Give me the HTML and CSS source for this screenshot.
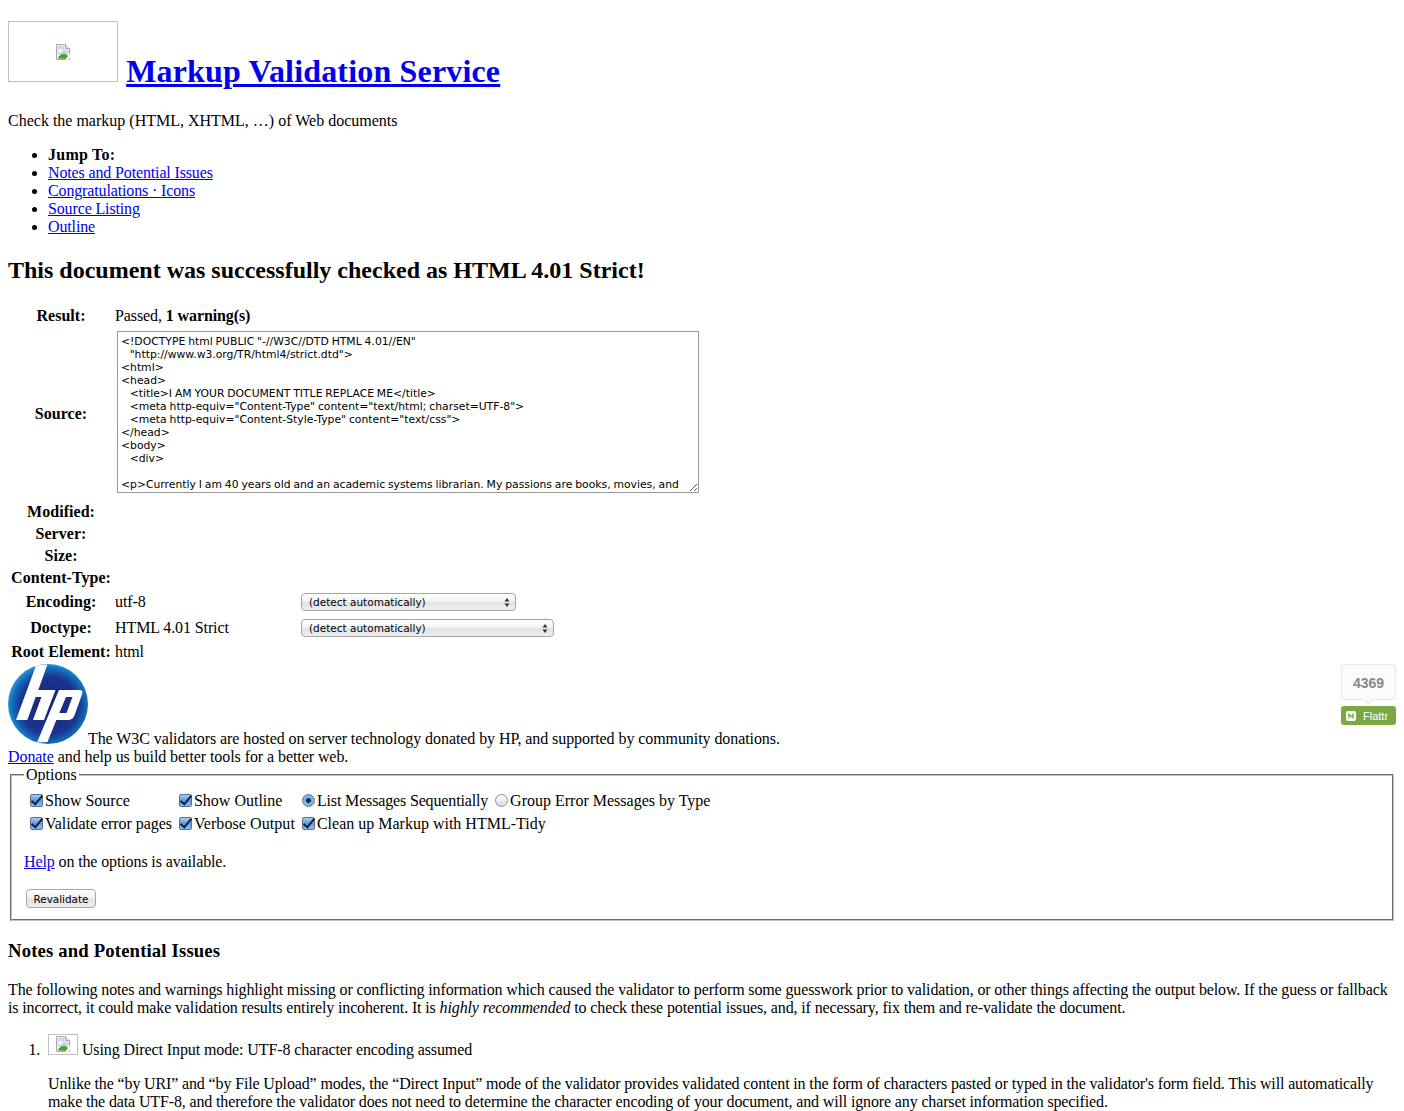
FILE: index.html
```html
<!DOCTYPE html>
<html lang="en">
<head>
  <meta charset="UTF-8">
  <title>[Valid] Markup Validation of upload://Form Submission - W3C Markup Validator</title>
  <link rel="stylesheet" href="styles.css">
</head>
<body>
  <svg class="defs" width="0" height="0" aria-hidden="true">
    <symbol id="broken" viewBox="0 0 16 16">
      <path d="M1.500.5h9l4 4v11h-13z" fill="#fff" stroke="#a9a9a9"/>
      <path d="M10.500.5v4h4" fill="#e8e8e8" stroke="#a9a9a9"/>
      <path d="M2.500 1.500h7v4h4v5l-11 .5z" fill="#c6d7f3"/>
      <path d="M3 7.500c1-3 4-3 5-1l-3 2z" fill="#fff"/>
      <path d="M2.500 14.500c2-4 6-6 9-4l2 2-2 2.500z" fill="#4fa02c"/>
      <path d="M16 8l-6 8h3l3-4zM16 14l-2 2h2z" fill="#fff"/>
    </symbol>
    <symbol id="updown" viewBox="0 0 6 9">
      <path d="M3 0l2.500 3.500h-5zM3 9l2.500-3.500h-5z" fill="#333"/>
    </symbol>
  </svg>

  <h1>
    <span class="img-box img-box-logo"><svg class="broken-icon"><use href="#broken"/></svg></span>
    <a href="#">Markup Validation Service</a>
  </h1>
  <p class="lead">Check the markup (HTML, XHTML, …) of Web documents</p>

  <ul class="jump">
    <li><strong>Jump To:</strong></li>
    <li><a href="#notes">Notes and Potential Issues</a></li>
    <li><a href="#">Congratulations · Icons</a></li>
    <li><a href="#">Source Listing</a></li>
    <li><a href="#">Outline</a></li>
  </ul>

  <h2>This document was successfully checked as HTML 4.01 Strict!</h2>

  <table class="result">
    <tr><th>Result:</th><td colspan="2">Passed, <strong>1 warning(s)</strong></td></tr>
    <tr>
      <th>Source:</th>
      <td colspan="2"><textarea class="source" readonly>&lt;!DOCTYPE html PUBLIC "-//W3C//DTD HTML 4.01//EN"
   "http://www.w3.org/TR/html4/strict.dtd"&gt;
&lt;html&gt;
&lt;head&gt;
   &lt;title&gt;I AM YOUR DOCUMENT TITLE REPLACE ME&lt;/title&gt;
   &lt;meta http-equiv="Content-Type" content="text/html; charset=UTF-8"&gt;
   &lt;meta http-equiv="Content-Style-Type" content="text/css"&gt;
&lt;/head&gt;
&lt;body&gt;
   &lt;div&gt;

&lt;p&gt;Currently I am 40 years old and an academic systems librarian. My passions are books, movies, and
music.&lt;/p&gt;</textarea></td>
    </tr>
    <tr><th>Modified:</th><td colspan="2"></td></tr>
    <tr><th>Server:</th><td colspan="2"></td></tr>
    <tr><th>Size:</th><td colspan="2"></td></tr>
    <tr><th>Content-Type:</th><td colspan="2"></td></tr>
    <tr>
      <th>Encoding:</th>
      <td class="value">utf-8</td>
      <td>
        <span class="select-wrap">
          <select class="select select-encoding"><option>(detect automatically)</option></select>
          <svg class="select-arrows"><use href="#updown"/></svg>
        </span>
      </td>
    </tr>
    <tr>
      <th>Doctype:</th>
      <td class="value">HTML 4.01 Strict</td>
      <td>
        <span class="select-wrap">
          <select class="select select-doctype"><option>(detect automatically)</option></select>
          <svg class="select-arrows"><use href="#updown"/></svg>
        </span>
      </td>
    </tr>
    <tr><th>Root Element:</th><td colspan="2">html</td></tr>
  </table>

  <div class="sponsor">
    <div class="flattr">
      <div class="flattr-count">4369</div>
      <a class="flattr-btn" href="#">
        <svg class="flattr-icon" viewBox="0 0 10 10">
          <rect width="10" height="10" rx="2" fill="#fff"/>
          <path d="M3 7.500V3.500L7 6.500V2.500" fill="none" stroke="#7ba843" stroke-width="1.400"/>
        </svg>
        Flattr
      </a>
    </div>
    <svg class="hp-logo" viewBox="0 0 80 80" role="img" aria-label="HP">
      <defs>
        <radialGradient id="hpBlue" cx="52%" cy="52%" r="52%">
          <stop offset="0" stop-color="#1a1f7a"/>
          <stop offset="0.7" stop-color="#1b3590"/>
          <stop offset="0.9" stop-color="#0f6fbb"/>
          <stop offset="1" stop-color="#2f8fd2"/>
        </radialGradient>
      </defs>
      <circle cx="40" cy="40" r="40" fill="url(#hpBlue)"/>
      <path d="M28 1.500l11.400-1L30.300 26h17.200L36 56H25l8.400-23h-5.700L19.300 56H8z" fill="#fff"/>
      <path fill-rule="evenodd" d="M51 26h20c4 0 4 1.500 3 4.500l-7 19.500c-1.500 4.500-3.500 6-8 6H48.400l-8.900 22-10.500 .5zM58 33l-6.700 16h7.200L64.500 33z" fill="#fff"/>
    </svg>The W3C validators are hosted on server technology donated by HP, and supported by community donations.<br>
    <a href="#">Donate</a> and help us build better tools for a better web.
  </div>

  <fieldset class="options">
    <legend>Options</legend>
    <table>
      <tr>
        <td><label><input type="checkbox" checked>Show Source</label></td>
        <td><label><input type="checkbox" checked>Show Outline</label></td>
        <td><label class="tight"><input type="radio" name="group" checked>List Messages Sequentially</label></td>
        <td><label><input type="radio" name="group">Group Error Messages by Type</label></td>
      </tr>
      <tr>
        <td><label class="tight-sm"><input type="checkbox" checked>Validate error pages</label></td>
        <td><label class="wide-sm"><input type="checkbox" checked>Verbose Output</label></td>
        <td colspan="2"><label><input type="checkbox" checked>Clean up Markup with HTML-Tidy</label></td>
      </tr>
    </table>
    <p class="help"><a href="#">Help</a> on the options is available.</p>
    <p class="submit"><button class="revalidate" type="button">Revalidate</button></p>
  </fieldset>

  <h3 id="notes">Notes and Potential Issues</h3>
  <p class="notes-intro">The following notes and warnings highlight missing or conflicting information which caused the validator to perform some guesswork prior to validation, or other things affecting the output below. If the guess or fallback is incorrect, it could make validation results entirely incoherent. It is <em>highly recommended</em> to check these potential issues, and, if necessary, fix them and re-validate the document.</p>

  <ol class="notes">
    <li>
      <span class="img-box img-box-info"><svg class="broken-icon"><use href="#broken"/></svg></span>
      Using Direct Input mode: UTF-8 character encoding assumed
      <p>Unlike the “by URI” and “by File Upload” modes, the “Direct Input” mode of the validator provides validated content in the form of characters pasted or typed in the validator's form field. This will automatically make the data UTF-8, and therefore the validator does not need to determine the character encoding of your document, and will ignore any charset information specified.</p>
    </li>
  </ol>
</body>
</html>
```

FILE: styles.css
```css
html {
  height: 1111px;
  overflow: hidden;
}

body {
  font-family: "Liberation Serif", "Times New Roman", serif;
  font-size: 16px;
  line-height: 18px;
  letter-spacing: -0.1px;
  color: #000;
}

a {
  color: #00e;
}

h1 {
  margin: 13px 0 22.44px;
  font-size: 32px;
  line-height: 37px;
  letter-spacing: 0.17px;
}

h2 {
  margin-top: 21px;
  font-size: 24px;
  line-height: 27px;
  letter-spacing: 0;
}

h3 {
  margin: 18.7px 0 19.7px;
  font-size: 18.72px;
  line-height: 21px;
  letter-spacing: 0.15px;
}

.lead {
  letter-spacing: 0;
}

.jump {
  letter-spacing: -0.14px;
}

.jump strong {
  letter-spacing: 0.25px;
}

.defs {
  position: absolute;
}

.img-box {
  display: inline-block;
  box-sizing: border-box;
  border: 1px solid #c0c0c0;
  overflow: hidden;
}

.img-box-logo {
  width: 110px;
  height: 61px;
  padding-top: 22px;
}

.img-box-info {
  width: 30px;
  height: 21px;
  padding-top: 1px;
}

.broken-icon {
  display: block;
  width: 16px;
  height: 16px;
  margin: 0 auto;
}

/* result table */
.result th {
  width: 100px;
  letter-spacing: 0.05px;
}

.value {
  width: 180px;
}

.source {
  display: inline-block;
  box-sizing: border-box;
  width: 582px;
  height: 162px;
  margin: 2px;
  padding: 3px 3px 2px;
  border: 1px solid #9a9a9a;
  font-family: "DejaVu Sans", sans-serif;
  font-size: 10.8px;
  word-spacing: -0.55px;
  line-height: 13px;
  color: #000;
  overflow: hidden;
  resize: both;
}

.select-wrap {
  display: inline-block;
  position: relative;
  margin: 2px;
  line-height: 0;
}

.select {
  appearance: none;
  box-sizing: border-box;
  height: 18px;
  padding: 0 7px;
  border: 1px solid #a6a6a6;
  border-radius: 4px;
  background: linear-gradient(#fff, #f3f3f3 45%, #e2e2e2 55%, #efefef);
  font-family: "DejaVu Sans", sans-serif;
  font-size: 10.5px;
  color: #000;
}

.select-encoding {
  width: 215px;
}

.select-doctype {
  width: 253px;
}

.select-arrows {
  position: absolute;
  top: 5px;
  right: 6px;
  width: 6px;
  height: 9px;
}

/* sponsor + flattr */
.sponsor {
  letter-spacing: -0.075px;
}

.flattr {
  float: right;
  width: 55px;
  font-family: "Liberation Sans", Arial, sans-serif;
  letter-spacing: 0;
}

.flattr-count {
  position: relative;
  box-sizing: border-box;
  height: 36px;
  border: 1px solid #e8e8e8;
  border-radius: 3px;
  background: #fbfbfb;
  color: #888;
  font-size: 14px;
  font-weight: bold;
  line-height: 36px;
  text-align: center;
}

.flattr-count::after {
  content: "";
  position: absolute;
  left: 23px;
  bottom: -4px;
  width: 6px;
  height: 6px;
  border-right: 1px solid #e8e8e8;
  border-bottom: 1px solid #e8e8e8;
  background: #fbfbfb;
  transform: rotate(45deg);
}

.flattr-btn {
  display: flex;
  align-items: center;
  gap: 7px;
  box-sizing: border-box;
  height: 19px;
  margin-top: 6px;
  padding-left: 5px;
  border-radius: 3px;
  background: #7ba843;
  color: #fff;
  font-size: 11px;
  text-decoration: none;
}

.flattr-icon {
  width: 10px;
  height: 10px;
}

.hp-logo {
  width: 80px;
  height: 80px;
}

/* options */
.options {
  margin: 0 2px 2px;
  padding: 5px 12px 11px;
  border: 2px groove #c0c0c0;
  letter-spacing: 0;
}

.options legend {
  padding: 0 2px;
}

.options table {
  margin-bottom: 3px;
}

.options label {
  display: block;
  height: 19px;
}

.options .tight {
  letter-spacing: -0.15px;
}

.options .tight-sm {
  letter-spacing: -0.05px;
}

.options .wide-sm {
  letter-spacing: 0.07px;
}

.options input {
  appearance: none;
  position: relative;
  box-sizing: border-box;
  width: 13px;
  height: 13px;
  margin: 1px 2px 1px 3px;
  border: 1px solid #8d8d8d;
  vertical-align: -2px;
  background: linear-gradient(#fdfdfd, #dcdcdc);
}

.options input[type="checkbox"] {
  border-radius: 2px;
  background: linear-gradient(#a9cbee, #5f9bdc 50%, #8dbdf0);
  border-color: #5a7190;
}

.options input[type="checkbox"]::after {
  content: "";
  position: absolute;
  left: 3px;
  top: -2px;
  width: 4px;
  height: 10px;
  border-right: 2px solid #10203a;
  border-bottom: 2px solid #10203a;
  transform: rotate(40deg);
}

.options input[type="radio"] {
  border-radius: 50%;
}

.options input[type="radio"]:checked {
  background: radial-gradient(circle, #10203a 0 2px, #6aa5e3 2.5px, #a9cbee);
  border-color: #5a7190;
}

.help {
  letter-spacing: -0.12px;
}

.submit {
  margin: 14px 0 0;
}

.revalidate {
  box-sizing: border-box;
  width: 70px;
  height: 19px;
  margin: 2px 2px 0;
  padding: 0;
  border: 1px solid #a6a6a6;
  border-radius: 4px;
  background: linear-gradient(#fff, #f3f3f3 45%, #e2e2e2 55%, #efefef);
  font-family: "DejaVu Sans", sans-serif;
  font-size: 10.4px;
  color: #000;
}

/* notes */
.notes-intro {
  letter-spacing: -0.13px;
}

.notes {
  margin-top: 17px;
}

.notes li::marker {
  content: "1.\a0\a0";
}

.notes p {
  margin-top: 16px;
  letter-spacing: -0.14px;
}
```
